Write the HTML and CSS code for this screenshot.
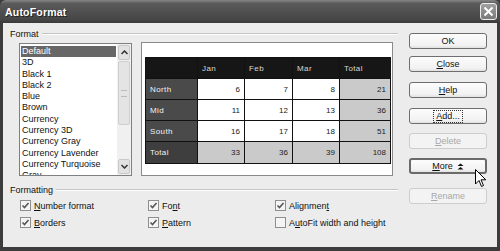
FILE: index.html
```html
<!DOCTYPE html>
<html lang="en">
<head>
    <meta charset="UTF-8">
    <title>AutoFormat</title>
    <link rel="stylesheet" href="styles.css">
</head>
<body>
    <div class="window">
        <div class="titlebar">
            <span class="title">AutoFormat</span>
            <span class="close-btn">
                <svg width="11" height="11" viewBox="0 0 11 11"><path d="M1.5 1.5 L9.5 9.5 M9.5 1.5 L1.5 9.5" stroke="#fff" stroke-width="2"/></svg>
            </span>
        </div>
        <div class="frame">
            <div class="main">
                <div class="group-title"><span>Format</span><span class="rule"></span></div>
                <div class="format-area">
                    <div class="listbox">
                        <ul class="items">
                            <li class="selected">Default</li>
                            <li>3D</li>
                            <li>Black 1</li>
                            <li>Black 2</li>
                            <li>Blue</li>
                            <li>Brown</li>
                            <li>Currency</li>
                            <li>Currency 3D</li>
                            <li>Currency Gray</li>
                            <li>Currency Lavender</li>
                            <li>Currency Turquoise</li>
                            <li>Gray</li>
                        </ul>
                        <div class="scrollbar">
                            <span class="sb-btn">
                                <svg width="7" height="5" viewBox="0 0 7 5"><path d="M0.5 4 L3.5 1 L6.5 4" fill="none" stroke="#333" stroke-width="1.5"/></svg>
                            </span>
                            <span class="sb-thumb"><span class="grip"></span></span>
                            <span class="sb-track"></span>
                            <span class="sb-btn">
                                <svg width="7" height="5" viewBox="0 0 7 5"><path d="M0.5 1 L3.5 4 L6.5 1" fill="none" stroke="#333" stroke-width="1.5"/></svg>
                            </span>
                        </div>
                    </div>
                    <div class="preview">
                        <table class="sample">
                            <tr class="head">
                                <td class="corner"></td><td>Jan</td><td>Feb</td><td>Mar</td><td>Total</td>
                            </tr>
                            <tr>
                                <td class="rowhead">North</td><td class="num">6</td><td class="num">7</td><td class="num">8</td><td class="num sum">21</td>
                            </tr>
                            <tr>
                                <td class="rowhead">Mid</td><td class="num">11</td><td class="num">12</td><td class="num">13</td><td class="num sum">36</td>
                            </tr>
                            <tr>
                                <td class="rowhead">South</td><td class="num">16</td><td class="num">17</td><td class="num">18</td><td class="num sum">51</td>
                            </tr>
                            <tr class="total">
                                <td class="rowhead">Total</td><td class="num sum">33</td><td class="num sum">36</td><td class="num sum">39</td><td class="num sum">108</td>
                            </tr>
                        </table>
                    </div>
                </div>
                <div class="group-title second"><span>Formatting</span><span class="rule"></span></div>
                <div class="options">
                    <label class="opt"><span class="box checked"></span><span><u>N</u>umber format</span></label>
                    <label class="opt"><span class="box checked"></span><span>Fo<u>n</u>t</span></label>
                    <label class="opt"><span class="box checked"></span><span>Alignmen<u>t</u></span></label>
                    <label class="opt"><span class="box checked"></span><span><u>B</u>orders</span></label>
                    <label class="opt"><span class="box checked"></span><span><u>P</u>attern</span></label>
                    <label class="opt"><span class="box"></span><span>A<u>u</u>toFit width and height</span></label>
                </div>
            </div>
            <div class="actions">
                <button class="btn b-ok">OK</button>
                <button class="btn b-close"><u>C</u>lose</button>
                <button class="btn b-help"><u>H</u>elp</button>
                <button class="btn b-add"><span class="focus"><u>A</u>dd...</span></button>
                <button class="btn b-delete" disabled><u>D</u>elete</button>
                <button class="btn b-more"><span><u>M</u>ore</span><span class="chev">
                    <svg width="7" height="7" viewBox="0 0 7 7"><path d="M0.5 3 L3.5 0.5 L6.5 3 Z M0.5 6.5 L3.5 4 L6.5 6.5 Z" fill="#111"/></svg>
                </span></button>
                <button class="btn b-rename" disabled><u>R</u>ename</button>
            </div>
        </div>
        <svg class="cursor" width="12" height="19" viewBox="0 0 12 19">
            <path d="M0.5 0.5 L0.5 15 L4 11.5 L6.5 17.5 L8.5 16.5 L6 10.8 L10.8 10.8 Z" fill="#fff" stroke="#000" stroke-width="1"/>
        </svg>
    </div>
</body>
</html>
```

FILE: styles.css
```css
body {
    margin: 0;
    font-family: "Liberation Sans", Arial, sans-serif;
    font-size: 9px;
    color: #111;
    background: #ececec;
}
.window {
    position: relative;
    width: 500px;
    height: 251px;
    display: flex;
    flex-direction: column;
    background: #3c3c3c;
}
.titlebar {
    height: 23px;
    display: flex;
    align-items: center;
    justify-content: space-between;
    padding: 0 3px 0 5px;
    border-radius: 6px 6px 0 0;
    background: linear-gradient(#868686 0%, #5a5a5a 15%, #505050 50%, #464646 85%, #3a3a3a 100%);
}
.title {
    color: #fff;
    font-weight: bold;
    font-size: 10.5px;
    letter-spacing: 0.2px;
    text-shadow: 1px 1px 0 #222;
}
.close-btn {
    width: 17px;
    height: 17px;
    box-sizing: border-box;
    border: 1px solid #eee;
    border-radius: 3px;
    background: linear-gradient(#a0a0a0, #7a7a7a);
    display: flex;
    align-items: center;
    justify-content: center;
}
.frame {
    flex: 1;
    display: flex;
    margin: 0 3px 4px 3px;
    background: #ececec;
}
.main {
    width: 388px;
    padding-left: 7px;
}
.group-title {
    display: flex;
    align-items: center;
    height: 14px;
    margin-top: 4px;
    gap: 3px;
}
.group-title.second {
    margin-top: 7px;
}
.rule {
    flex: 1;
    border-top: 1px solid #c4c4c4;
    border-bottom: 1px solid #fff;
}
.format-area {
    display: flex;
    align-items: flex-start;
    padding-left: 9px;
    margin-top: 1px;
}
.listbox {
    width: 113px;
    height: 133px;
    box-sizing: border-box;
    border: 1px solid #7f7f7f;
    background: #fff;
    display: flex;
    overflow: hidden;
    margin-top: 1px;
}
.items {
    list-style: none;
    margin: 0;
    padding: 2px 1px 0 1px;
    flex: 1;
}
.items li {
    height: 11.3px;
    line-height: 11.3px;
    padding-left: 1px;
    white-space: nowrap;
}
.items li.selected {
    background: #676767;
    color: #fff;
}
.scrollbar {
    width: 14px;
    display: flex;
    flex-direction: column;
    background: #f0f0f0;
    padding: 1px 0;
}
.sb-btn {
    height: 13px;
    margin: 0 1px;
    border: 1px solid #c8c8c8;
    border-radius: 2px;
    background: #e2e2e2;
    display: flex;
    align-items: center;
    justify-content: center;
}
.sb-thumb {
    height: 62px;
    margin: 1px 1px 0 1px;
    border: 1px solid #cfcfcf;
    border-radius: 2px;
    background: #e4e4e4;
    display: flex;
    align-items: center;
    justify-content: center;
}
.grip {
    width: 6px;
    height: 5px;
    border-top: 1px solid #bbb;
    border-bottom: 1px solid #bbb;
}
.sb-track {
    flex: 1;
}
.preview {
    margin-left: 9px;
    width: 252px;
    height: 134px;
    box-sizing: border-box;
    border: 1px solid #8a8a8a;
    background: #fff;
    padding: 14px 0 0 3px;
}
.sample {
    border-collapse: collapse;
    table-layout: fixed;
    width: 245px;
    font-size: 8px;
}
.sample td {
    box-sizing: border-box;
    border: 1px solid #111;
    height: 21px;
    padding: 0 4px;
    background: #fff;
    color: #222;
    white-space: nowrap;
}
.sample td:nth-child(1) { width: 52px; }
.sample td:nth-child(2) { width: 47px; }
.sample td:nth-child(3) { width: 48px; }
.sample td:nth-child(4) { width: 47px; }
.sample td:nth-child(5) { width: 51px; }
.sample .head td {
    background: #161616;
    color: #d8d8d8;
    letter-spacing: 0.4px;
}
.sample td.rowhead {
    background: #4a4a4a;
    color: #f2f2f2;
    letter-spacing: 0.4px;
}
.sample .total td {
    height: 22px;
}
.sample .total td.rowhead {
    background: #3e3e3e;
}
.sample td.num {
    text-align: right;
}
.sample td.sum {
    background: #cacaca;
}
.options {
    display: grid;
    grid-template-columns: 128px 127px auto;
    grid-auto-rows: 17px;
    padding-left: 10px;
    margin-top: 0;
}
.opt {
    display: flex;
    align-items: center;
    gap: 3px;
}
.box {
    width: 11px;
    height: 11px;
    box-sizing: border-box;
    border: 1px solid #8e8e8e;
    background: #f4f4f4;
    display: inline-block;
}
.box.checked {
    background: #f4f4f4 url("data:image/svg+xml,%3Csvg xmlns='http://www.w3.org/2000/svg' width='9' height='9'%3E%3Cpath d='M1.5 4.5 L3.5 6.5 L7.5 2' fill='none' stroke='%23555' stroke-width='1.6'/%3E%3C/svg%3E") center no-repeat;
}
.actions {
    display: flex;
    flex-direction: column;
    margin-left: 11px;
    padding-top: 10px;
    width: 78px;
}
.btn {
    height: 16px;
    padding: 0;
    font-family: inherit;
    font-size: 9px;
    color: #111;
    border: 1px solid #6e6e6e;
    border-radius: 3px;
    background: linear-gradient(#fcfcfc, #f2f2f2 80%, #e0e0e0);
    display: flex;
    align-items: center;
    justify-content: center;
}
.b-close { margin-top: 7px; }
.b-help { margin-top: 10px; }
.b-add { margin-top: 10px; }
.b-delete { margin-top: 9px; }
.b-more {
    margin-top: 9px;
    border: 2px solid #6a6a6a;
    gap: 4px;
}
.b-rename { margin-top: 14px; }
.btn:disabled {
    color: #a8a8a8;
    border-color: #cdcdcd;
    background: #f3f3f3;
}
.focus {
    border: 1px dotted #333;
    padding: 0 2px;
    line-height: 11px;
}
.chev {
    display: flex;
}
.cursor {
    position: absolute;
    left: 475px;
    top: 169px;
}
```
